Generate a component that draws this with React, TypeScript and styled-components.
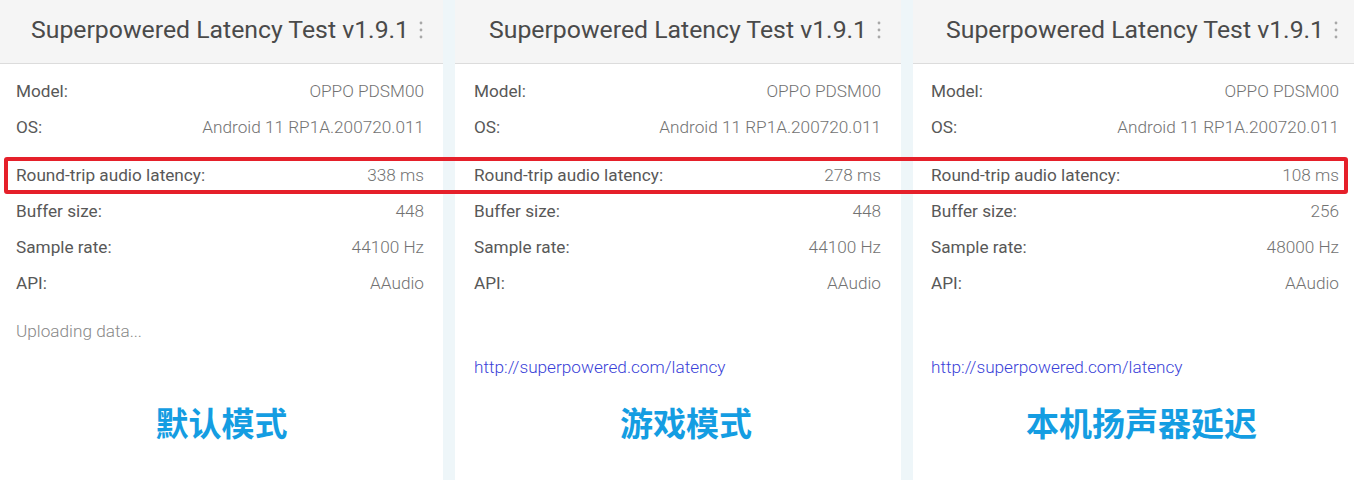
import React from "react";
import styled, { createGlobalStyle } from "styled-components";

const GlobalStyle = createGlobalStyle`
  html, body {
    margin: 0;
    padding: 0;
    background: #eef6f9;
  }
  body {
    font-family: Roboto, "Noto Sans", "Noto Sans CJK SC", sans-serif;
  }
`;

type Row = { label: string; value: string };

type PanelData = {
  width: number;
  titleInset: number;
  left: number;
  right: number;
  rows: Row[];
  status?: string;
  link?: string;
  caption: string;
  captionShift: number;
};

const device: Row[] = [
  { label: "Model:", value: "OPPO PDSM00" },
  { label: "OS:", value: "Android 11 RP1A.200720.011" },
];

const panels: PanelData[] = [
  {
    width: 443,
    titleInset: 31,
    left: 16,
    right: 19,
    rows: [
      { label: "Round-trip audio latency:", value: "338 ms" },
      { label: "Buffer size:", value: "448" },
      { label: "Sample rate:", value: "44100 Hz" },
      { label: "API:", value: "AAudio" },
    ],
    status: "Uploading data...",
    caption: "默认模式",
    captionShift: 0,
  },
  {
    width: 446,
    titleInset: 34,
    left: 19,
    right: 20,
    rows: [
      { label: "Round-trip audio latency:", value: "278 ms" },
      { label: "Buffer size:", value: "448" },
      { label: "Sample rate:", value: "44100 Hz" },
      { label: "API:", value: "AAudio" },
    ],
    link: "http://superpowered.com/latency",
    caption: "游戏模式",
    captionShift: 8,
  },
  {
    width: 441,
    titleInset: 33,
    left: 18,
    right: 15,
    rows: [
      { label: "Round-trip audio latency:", value: "108 ms" },
      { label: "Buffer size:", value: "256" },
      { label: "Sample rate:", value: "48000 Hz" },
      { label: "API:", value: "AAudio" },
    ],
    link: "http://superpowered.com/latency",
    caption: "本机扬声器延迟",
    captionShift: 8,
  },
];

function Kebab() {
  return (
    <KebabIcon width="6" height="20" viewBox="0 0 6 20">
      <circle cx="3" cy="3" r="1.4" />
      <circle cx="3" cy="10" r="1.4" />
      <circle cx="3" cy="17" r="1.4" />
    </KebabIcon>
  );
}

function Panel({ data }: { data: PanelData }) {
  return (
    <PanelWrapper $width={data.width}>
      <Header $inset={data.titleInset}>
        <Title>Superpowered Latency Test v1.9.1</Title>
        <Kebab />
      </Header>
      <Body $left={data.left} $right={data.right}>
        <Group>
          {device.map((r) => (
            <InfoRow key={r.label}>
              <Label>{r.label}</Label>
              <Value>{r.value}</Value>
            </InfoRow>
          ))}
        </Group>
        <Group>
          {data.rows.map((r) => (
            <InfoRow key={r.label}>
              <Label>{r.label}</Label>
              <Value>{r.value}</Value>
            </InfoRow>
          ))}
        </Group>
        <Status>{data.status ?? ""}</Status>
        <Link>{data.link ?? ""}</Link>
      </Body>
      <Caption $shift={data.captionShift}>{data.caption}</Caption>
    </PanelWrapper>
  );
}

export default function App() {
  return (
    <>
      <GlobalStyle />
      <Page>
        {panels.map((p, i) => (
          <Panel key={i} data={p} />
        ))}
        <Highlight />
      </Page>
    </>
  );
}

const Page = styled.div`
  position: relative;
  display: flex;
  gap: 12px;
  width: 1354px;
  height: 480px;
  overflow: hidden;
  background: #eef6f9;
`;

const PanelWrapper = styled.section<{ $width: number }>`
  display: flex;
  flex-direction: column;
  width: ${({ $width }) => $width}px;
  flex-shrink: 0;
  height: 480px;
  background: #ffffff;
`;

const Header = styled.header<{ $inset: number }>`
  display: flex;
  align-items: center;
  gap: 9px;
  height: 64px;
  padding-left: ${({ $inset }) => $inset}px;
  padding-bottom: 4px;
  box-sizing: border-box;
  background: #f5f5f5;
  border-bottom: 1px solid #dcdcdc;
`;

const Title = styled.h1`
  margin: 0;
  font-family: Roboto, "Noto Sans", sans-serif;
  font-weight: 400;
  font-size: 24.8px;
  color: #4a4a4a;
  white-space: nowrap;
`;

const KebabIcon = styled.svg`
  fill: #a8a8a8;
  flex-shrink: 0;
`;

const Body = styled.div<{ $left: number; $right: number }>`
  display: flex;
  flex-direction: column;
  gap: 12px;
  padding: 9px ${({ $right }) => $right}px 0 ${({ $left }) => $left}px;
`;

const Group = styled.div`
  display: flex;
  flex-direction: column;
`;

const InfoRow = styled.div`
  display: flex;
  justify-content: space-between;
  align-items: center;
  height: 36px;
  font-size: 17.2px;
`;

const Label = styled.span`
  color: #585858;
`;

const Value = styled.span`
  color: #727272;
  font-weight: 300;
`;

const Status = styled.div`
  height: 36px;
  line-height: 36px;
  font-size: 17.2px;
  font-weight: 300;
  color: #888888;
`;

const Link = styled.div`
  height: 36px;
  line-height: 36px;
  margin-top: -12px;
  font-size: 17.2px;
  font-weight: 300;
  color: #3a3fd8;
`;

const Caption = styled.div<{ $shift: number }>`
  margin-top: 17px;
  padding-left: ${({ $shift }) => $shift * 2}px;
  height: 40px;
  line-height: 40px;
  text-align: center;
  font-family: "Noto Sans CJK SC", sans-serif;
  font-weight: 700;
  font-size: 33px;
  color: #149de2;
`;

const Highlight = styled.div`
  position: absolute;
  left: 4px;
  top: 157px;
  width: 1344px;
  height: 37px;
  box-sizing: border-box;
  border: 4px solid #e5202a;
  border-radius: 3px;
  pointer-events: none;
`;
